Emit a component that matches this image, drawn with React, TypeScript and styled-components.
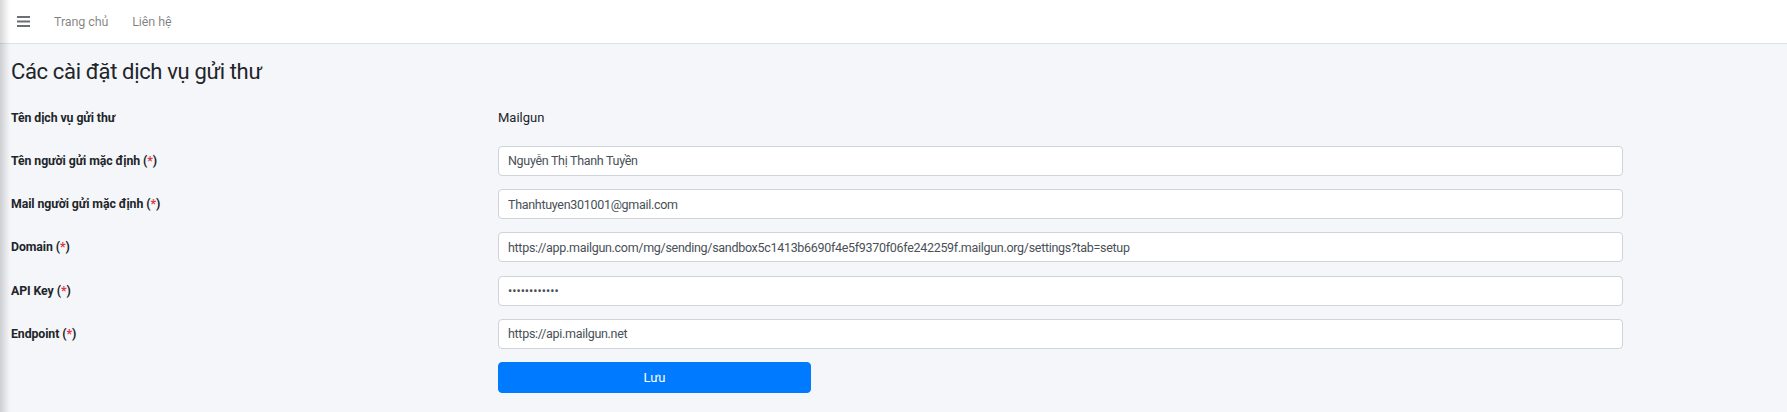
import React from "react";
import styled, { createGlobalStyle } from "styled-components";

const GlobalStyle = createGlobalStyle`
  * {
    box-sizing: border-box;
  }
  body {
    margin: 0;
    background: #f4f6f9;
    font-family: Roboto, "Noto Sans", sans-serif;
    color: #212529;
  }
`;

const Wrapper = styled.div`
  position: relative;
  min-height: 412px;
  background: #f4f6f9;

  &::after {
    content: "";
    position: absolute;
    left: 0;
    top: 0;
    bottom: 0;
    width: 10px;
    pointer-events: none;
    background: linear-gradient(to right, rgba(0, 0, 0, 0.16), rgba(0, 0, 0, 0));
  }
`;

const Navbar = styled.nav`
  height: 44px;
  display: flex;
  align-items: center;
  padding-left: 17px;
  background: #fff;
  border-bottom: 1px solid #dee2e6;
`;

const MenuButton = styled.button`
  display: flex;
  align-items: center;
  padding: 0;
  margin-right: 24px;
  border: 0;
  background: none;
  color: #6c6f73;
  cursor: pointer;
`;

const NavLink = styled.a`
  font-size: 12.5px;
  letter-spacing: -0.1px;
  color: rgba(0, 0, 0, 0.5);
  text-decoration: none;
  margin-right: 24px;
`;

const Content = styled.main`
  padding: 0 11px;
`;

const Title = styled.h1`
  margin: 14px 0 17px;
  font-size: 22px;
  letter-spacing: -0.35px;
  font-weight: 400;
  line-height: 1.25;
  color: #212529;
`;

const Form = styled.form`
  display: flex;
  flex-direction: column;
  gap: 13.3px;
`;

const Row = styled.div`
  display: grid;
  grid-template-columns: 487px 1125px;
  align-items: center;
  min-height: 30px;
`;

const Label = styled.label`
  font-size: 12.3px;
  letter-spacing: -0.08px;
  font-weight: 700;
  color: #212529;
`;

const Required = styled.span`
  color: #dc3545;
`;

const StaticValue = styled.div`
  font-size: 13px;
  color: #212529;
`;

const Input = styled.input`
  width: 100%;
  height: 30px;
  padding: 0 9px;
  font-family: inherit;
  font-size: 12.5px;
  letter-spacing: -0.3px;
  color: #495057;
  background: #fff;
  border: 1px solid #ced4da;
  border-radius: 4px;
  outline: none;

  &[type="password"] {
    letter-spacing: 0;
  }
`;

const SaveButton = styled.button`
  grid-column: 2;
  width: 313px;
  height: 31px;
  font-family: inherit;
  font-size: 13px;
  color: #fff;
  background: #007bff;
  border: 1px solid #007bff;
  border-radius: 4px;
  cursor: pointer;
`;

const fields = [
  { label: "Tên người gửi mặc định", value: "Nguyễn Thị Thanh Tuyền", type: "text" },
  { label: "Mail người gửi mặc định", value: "Thanhtuyen301001@gmail.com", type: "text" },
  {
    label: "Domain",
    value:
      "https://app.mailgun.com/mg/sending/sandbox5c1413b6690f4e5f9370f06fe242259f.mailgun.org/settings?tab=setup",
    type: "text",
  },
  { label: "API Key", value: "abcdefghijkl", type: "password" },
  { label: "Endpoint", value: "https://api.mailgun.net", type: "text" },
];

const MenuIcon = () => (
  <svg width="13" height="11" viewBox="0 0 13 11" fill="currentColor">
    <rect x="0" y="0" width="13" height="2" />
    <rect x="0" y="4.5" width="13" height="2" />
    <rect x="0" y="9" width="13" height="2" />
  </svg>
);

export default function App() {
  return (
    <Wrapper>
      <GlobalStyle />
      <Navbar>
        <MenuButton type="button" aria-label="Menu">
          <MenuIcon />
        </MenuButton>
        <NavLink href="#">Trang chủ</NavLink>
        <NavLink href="#">Liên hệ</NavLink>
      </Navbar>
      <Content>
        <Title>Các cài đặt dịch vụ gửi thư</Title>
        <Form onSubmit={(e) => e.preventDefault()}>
          <Row>
            <Label>Tên dịch vụ gửi thư</Label>
            <StaticValue>Mailgun</StaticValue>
          </Row>
          {fields.map((f) => (
            <Row key={f.label}>
              <Label>
                {f.label} (<Required>*</Required>)
              </Label>
              <Input type={f.type} defaultValue={f.value} readOnly />
            </Row>
          ))}
          <Row>
            <SaveButton type="submit">Lưu</SaveButton>
          </Row>
        </Form>
      </Content>
    </Wrapper>
  );
}
